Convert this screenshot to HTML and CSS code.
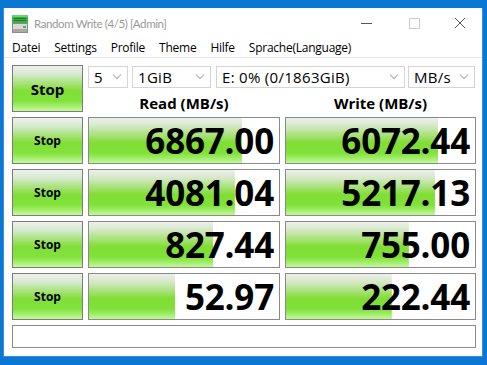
FILE: index.html
```html
<!DOCTYPE html>
<html lang="de">
<head>
    <meta charset="UTF-8">
    <title>Random Write (4/5) [Admin]</title>
    <link rel="stylesheet" href="styles.css">
</head>
<body>
    <div class="window">
        <div class="titlebar">
            <svg class="app-icon" width="16" height="18" viewBox="0 0 16 18">
                <rect x="0" y="0" width="16" height="8" fill="#3cb043"/>
                <rect x="0" y="0" width="16" height="2" fill="#6ad46e"/>
                <rect x="2" y="3" width="12" height="1" fill="#1d7a25"/>
                <rect x="2" y="5" width="12" height="1" fill="#1d7a25"/>
                <rect x="0" y="8" width="16" height="10" fill="#8c8c8c"/>
                <rect x="1" y="9" width="14" height="8" fill="#d8d8d8"/>
                <rect x="1" y="14" width="14" height="3" fill="#a8a8a8"/>
                <rect x="11" y="11" width="3" height="2" fill="#40c040"/>
            </svg>
            <span class="title">Random Write (4/5) [Admin]</span>
            <div class="caption-buttons">
                <svg width="46" height="30" viewBox="0 0 46 30"><line x1="17" y1="15.5" x2="28" y2="15.5" stroke="#555" stroke-width="1"/></svg>
                <svg width="46" height="30" viewBox="0 0 46 30"><rect x="19.5" y="10.5" width="10" height="10" fill="none" stroke="#ccc" stroke-width="1"/></svg>
                <svg width="46" height="30" viewBox="0 0 46 30"><path d="M19 10 L29 20 M29 10 L19 20" stroke="#555" stroke-width="1"/></svg>
            </div>
        </div>

        <div class="menubar">
            <span>Datei</span>
            <span>Settings</span>
            <span>Profile</span>
            <span>Theme</span>
            <span>Hilfe</span>
            <span>Sprache(Language)</span>
        </div>

        <div class="client">
            <button class="stop-button big">Stop</button>
            <div class="top-controls">
                <div class="combos">
                    <div class="combo c-count"><span>5</span><i class="chevron"></i></div>
                    <div class="combo c-size"><span>1GiB</span><i class="chevron"></i></div>
                    <div class="combo c-drive"><span>E: 0% (0/1863GiB)</span><i class="chevron"></i></div>
                    <div class="combo c-unit"><span>MB/s</span><i class="chevron"></i></div>
                </div>
                <div class="headers">
                    <div class="col-title">Read (MB/s)</div>
                    <div class="col-title">Write (MB/s)</div>
                </div>
            </div>

            <button class="stop-button">Stop</button>
            <div class="value" style="--w: 80.5%">6867.00</div>
            <div class="value" style="--w: 80.4%">6072.44</div>

            <button class="stop-button">Stop</button>
            <div class="value" style="--w: 76.8%">4081.04</div>
            <div class="value" style="--w: 78.8%">5217.13</div>

            <button class="stop-button">Stop</button>
            <div class="value" style="--w: 65.3%">827.44</div>
            <div class="value" style="--w: 65%">755.00</div>

            <button class="stop-button">Stop</button>
            <div class="value" style="--w: 45.3%">52.97</div>
            <div class="value" style="--w: 56%">222.44</div>

            <div class="comment"></div>
        </div>
    </div>
</body>
</html>
```

FILE: styles.css
```css
body {
    margin: 0;
    background-color: #0a78d2;
    font-family: "Open Sans", "Noto Sans", sans-serif;
    color: #000;
}

.window {
    margin: 8px 4px 0 3px;
    height: 349px;
    box-sizing: border-box;
    background-color: #fff;
    border: 1px solid #3a8edb;
    border-top: none;
    display: flex;
    flex-direction: column;
}

.titlebar {
    height: 30px;
    display: flex;
    align-items: center;
    padding-left: 8px;
}

.app-icon {
    margin-top: 1px;
}

.title {
    margin-left: 6px;
    font-family: Lato, "Open Sans", sans-serif;
    font-size: 11.5px;
    letter-spacing: -0.4px;
    color: #999;
}

.caption-buttons {
    margin-left: auto;
    display: flex;
}

.caption-buttons svg {
    display: block;
}

.menubar {
    height: 19px;
    display: flex;
    align-items: center;
    font-size: 12px;
    padding-left: 1px;
    border-bottom: 1px solid #e6e6e6;
    letter-spacing: -0.25px;
}

.menubar span {
    padding: 0 7px;
}

.client {
    flex: 1;
    padding: 7px 7px 0 8px;
    display: grid;
    grid-template-columns: 71px 192px 191px;
    grid-template-rows: 47px 47px 47px 47px 47px 23px;
    column-gap: 5px;
    row-gap: 5px;
}

.stop-button {
    font-family: inherit;
    font-weight: bold;
    font-size: 12px;
    border: 1px solid #7c7c7c;
    padding: 0;
    background: linear-gradient(to bottom, #f0f0ee 0%, #d6ead0 18%, #a8e27a 38%, #82de38 55%, #82e33c 78%, #aef27a 92%, #c8f8a0 100%);
    color: #000;
    cursor: pointer;
}

.stop-button.big {
    font-size: 15px;
}

.top-controls {
    grid-column: 2 / 4;
    display: flex;
    flex-direction: column;
}

.combos {
    display: flex;
    margin-top: 1px;
    height: 22px;
}

.combo {
    box-sizing: border-box;
    height: 22px;
    border: 1px solid #d4d4d4;
    display: flex;
    align-items: center;
    font-size: 15px;
    letter-spacing: 0.3px;
    padding-left: 5px;
}

.combo span {
    flex: 1;
    line-height: 18px;
}

.chevron {
    width: 5px;
    height: 5px;
    border-right: 1px solid #aaa;
    border-bottom: 1px solid #aaa;
    transform: rotate(45deg);
    margin: 0 7px 4px 6px;
}

.c-count { width: 40px; margin-right: 4px; }
.c-size { width: 79px; margin-right: 5px; }
.c-drive { width: 189px; margin-right: 3px; }
.c-unit { width: 67px; }

.headers {
    display: flex;
    column-gap: 5px;
    margin-top: 5px;
}

.col-title {
    font-weight: bold;
    font-size: 15px;
    text-align: center;
}

.col-title:first-child { width: 192px; }
.col-title:last-child { width: 191px; }

.value {
    border: 1px solid #8a8a8a;
    background-color: #fff;
    background-image: linear-gradient(to bottom, #eef0ec 0%, #d4e8c6 18%, #a8e27a 38%, #80dd34 55%, #80e23a 78%, #a8f074 92%, #c4f89c 100%);
    background-size: var(--w) 100%;
    background-repeat: no-repeat;
    font-weight: bold;
    font-size: 35px;
    display: flex;
    align-items: center;
    justify-content: flex-end;
    padding-right: 5px;
    letter-spacing: -0.2px;
}

.comment {
    grid-column: 1 / 4;
    border: 1px solid #8a8a8a;
    background-color: #fff;
}
```
